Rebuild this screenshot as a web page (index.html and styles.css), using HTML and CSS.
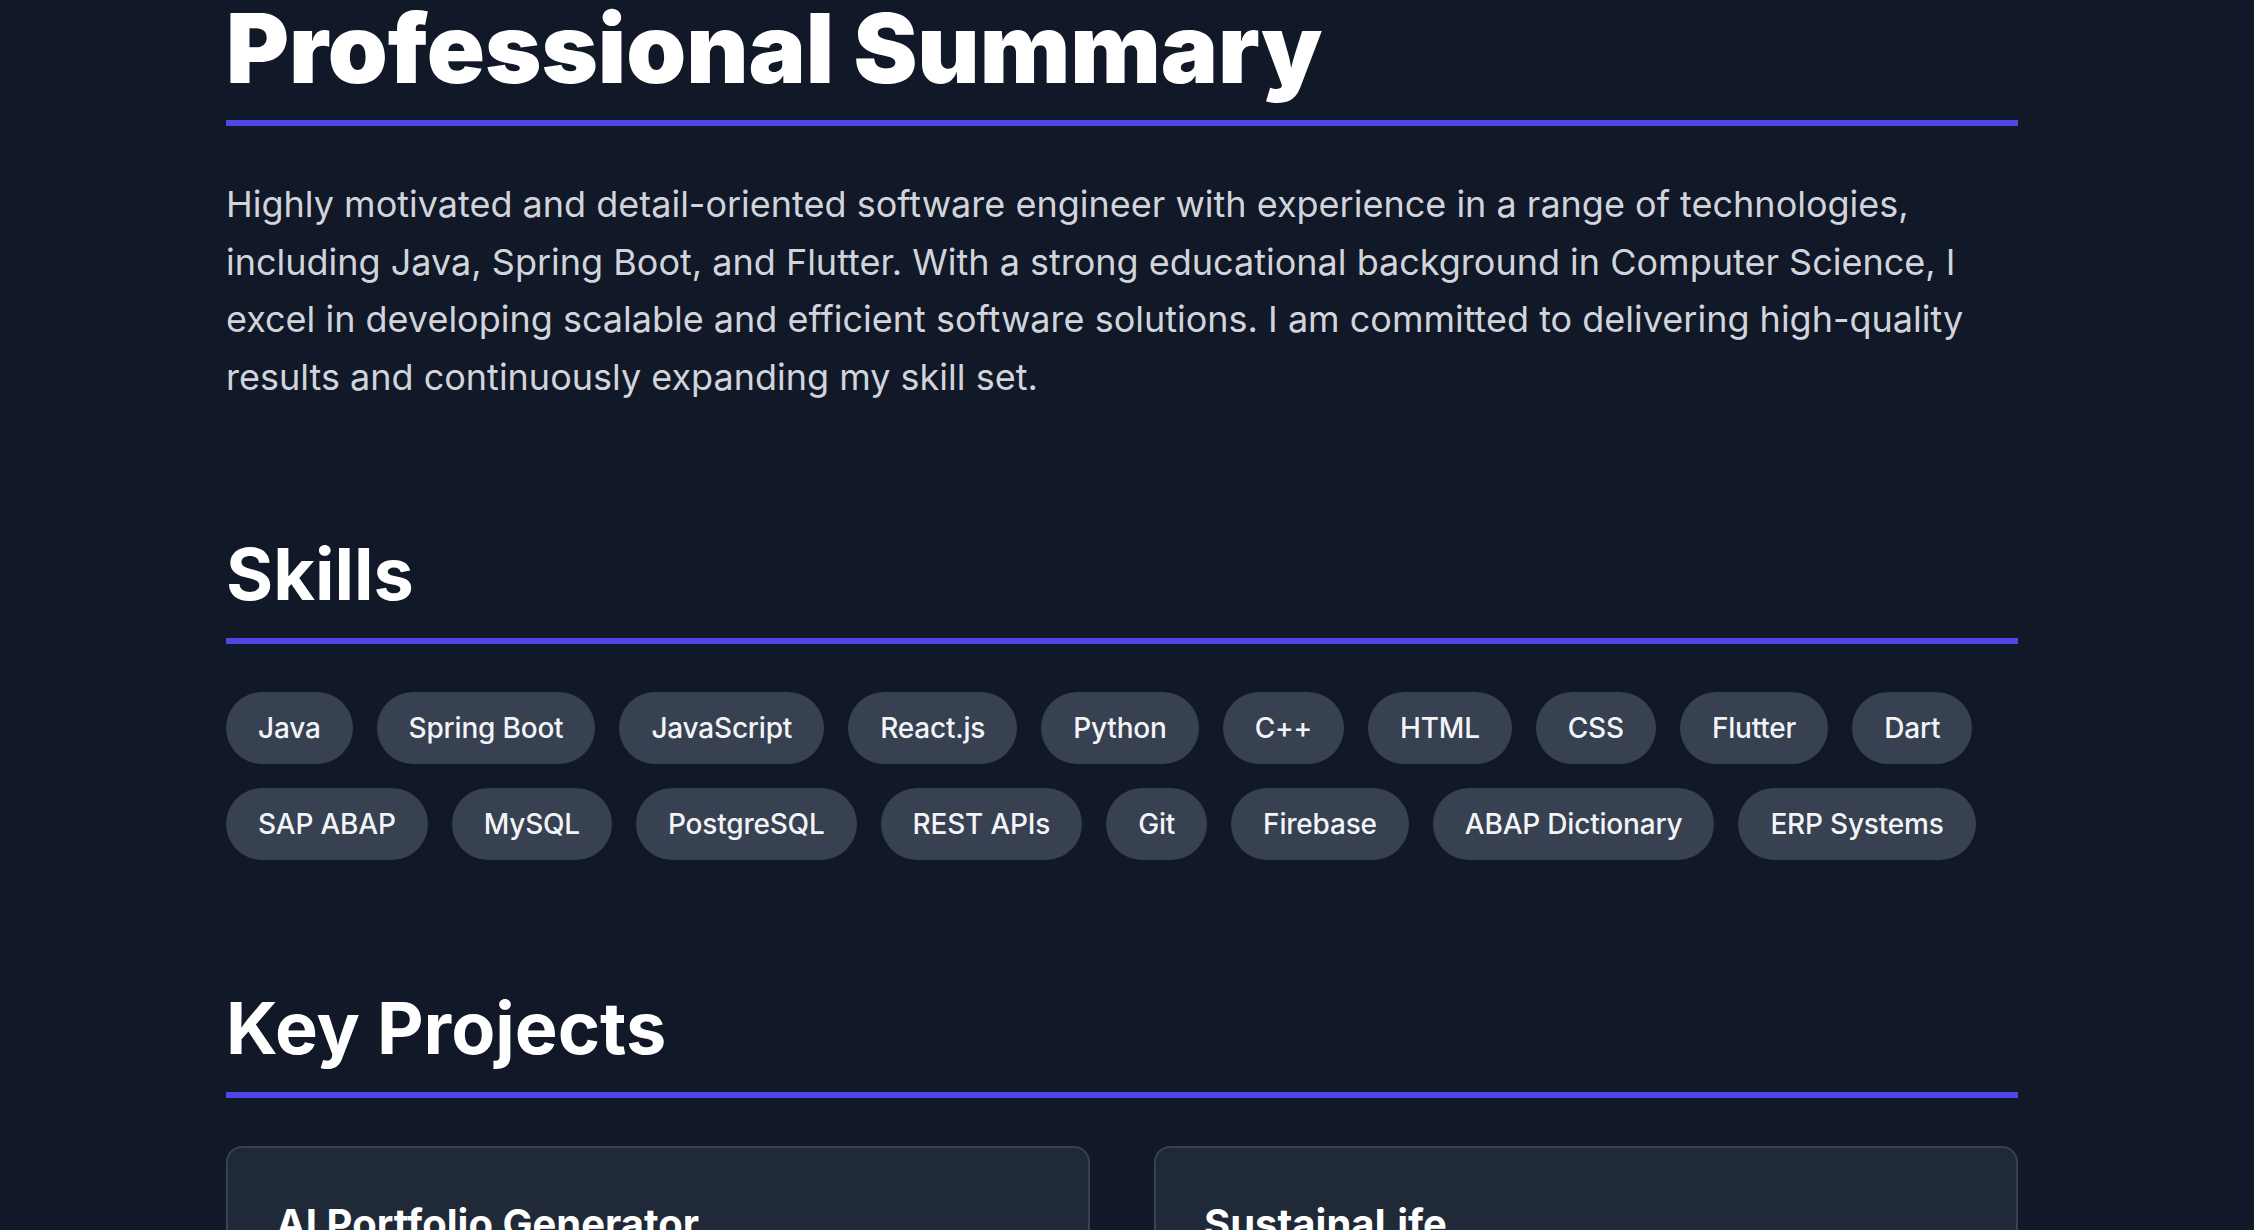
FILE: index.html
```html
<!DOCTYPE html>
<html lang="en">
<head>
<meta charset="utf-8">
<title>Resume</title>
<link rel="stylesheet" href="styles.css">
</head>
<body>
<main class="page">
  <section class="section">
    <h1 class="title title-lg">Professional Summary</h1>
    <p class="summary">Highly motivated and detail-oriented software engineer with experience in a range of technologies, including Java, Spring Boot, and Flutter. With a strong educational background in Computer Science, I excel in developing scalable and efficient software solutions. I am committed to delivering high-quality results and continuously expanding my skill set.</p>
  </section>

  <section class="section">
    <h2 class="title">Skills</h2>
    <ul class="chips">
      <li class="chip">Java</li>
      <li class="chip">Spring Boot</li>
      <li class="chip">JavaScript</li>
      <li class="chip">React.js</li>
      <li class="chip">Python</li>
      <li class="chip">C++</li>
      <li class="chip">HTML</li>
      <li class="chip">CSS</li>
      <li class="chip">Flutter</li>
      <li class="chip">Dart</li>
      <li class="chip">SAP ABAP</li>
      <li class="chip">MySQL</li>
      <li class="chip">PostgreSQL</li>
      <li class="chip">REST APIs</li>
      <li class="chip">Git</li>
      <li class="chip">Firebase</li>
      <li class="chip">ABAP Dictionary</li>
      <li class="chip">ERP Systems</li>
    </ul>
  </section>

  <section class="section">
    <h2 class="title">Key Projects</h2>
    <div class="projects">
      <article class="card">
        <h3 class="card-title">AI Portfolio Generator</h3>
        <p class="card-text">A web application that generates professional portfolios using AI from a user's resume and profile data.</p>
      </article>
      <article class="card">
        <h3 class="card-title">SustainaLife</h3>
        <p class="card-text">A mobile application built with Flutter and Firebase that helps users track and improve sustainable habits.</p>
      </article>
    </div>
  </section>
</main>
</body>
</html>
```

FILE: styles.css
```css
* {
  box-sizing: border-box;
}

html, body {
  margin: 0;
  padding: 0;
  background: #111827;
}

body {
  font-family: Inter, "Noto Sans", "Liberation Sans", sans-serif;
  color: #f9fafb;
  padding-right: 10px;
}

.page {
  max-width: 1792px;
  margin: 0 auto;
}

.section {
  margin: 0 0 128px 0;
}

.title {
  margin: 0 0 48px 0;
  padding-bottom: 24px;
  border-bottom: 6px solid #4f46e5;
  font-size: 72px;
  line-height: 80px;
  font-weight: 700;
  color: #ffffff;
}

.title-lg {
  font-size: 96px;
  line-height: 96px;
  font-weight: 900;
  margin-bottom: 50px;
}

.summary {
  margin: 0;
  font-size: 36px;
  line-height: 57.6px;
  color: #d1d5db;
}

.chips {
  list-style: none;
  margin: 0;
  padding: 0;
  display: flex;
  flex-wrap: wrap;
  gap: 24px;
}

.chip {
  background: #374151;
  color: #f3f4f6;
  font-size: 28px;
  line-height: 40px;
  font-weight: 500;
  letter-spacing: -0.2px;
  padding: 16px 32px;
  border-radius: 9999px;
}

.projects {
  display: grid;
  grid-template-columns: 1fr 1fr;
  gap: 64px;
}

.card {
  background: #1f2937;
  border: 2px solid #374151;
  border-radius: 16px;
  padding: 48px;
}

.card-title {
  margin: 0 0 16px 0;
  font-size: 40px;
  line-height: 56px;
  font-weight: 700;
  color: #ffffff;
}

.card-text {
  margin: 0;
  font-size: 32px;
  line-height: 52px;
  color: #d1d5db;
}
```
